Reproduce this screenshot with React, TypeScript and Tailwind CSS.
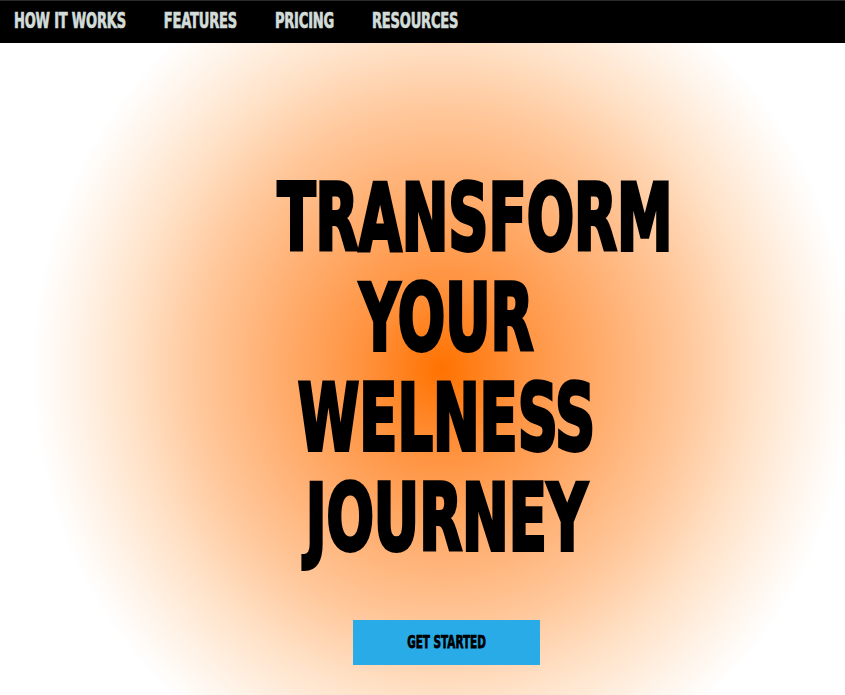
const NAV_ITEMS = ["HOW IT WORKS", "FEATURES", "PRICING", "RESOURCES"];

const HEADLINE = ["TRANSFORM", "YOUR", "WELNESS", "JOURNEY"];

// no Impact in the sandbox, so a condensed bold stretched up comes closest
const impact = {
  fontFamily: '"Liberation Sans Narrow", "DejaVu Sans Condensed", "Liberation Sans", sans-serif',
};

const Navbar = () => (
  <nav className="flex h-[43px] items-center gap-[38px] border-t border-[#2b2b2b] bg-black pl-[14px]">
    {NAV_ITEMS.map((item) => (
      <a
        key={item}
        href="#"
        style={impact}
        className="inline-block scale-y-[1.4] text-[14.5px] font-bold tracking-[-0.2px] text-[#d2dcd9] [-webkit-text-stroke:0.5px_#d2dcd9]"
      >
        {item}
      </a>
    ))}
  </nav>
);

const Hero = () => (
  <section className="flex h-[652px] flex-col items-center overflow-hidden bg-[radial-gradient(ellipse_410px_435px_at_442px_326px,#ff7200_0%,#ff9340_20%,#ffad6e_40%,#ffc89c_60%,#ffe2c8_76%,#fff4ea_90%,#ffffff_100%)] pl-[48px] pt-[125px]">
    <h1 style={impact} className="w-[338px] text-center text-[62px] font-bold text-black">
      {HEADLINE.map((line) => (
        <span key={line} className="block leading-[100px] whitespace-nowrap">
          <span className="inline-block scale-y-[1.5] [-webkit-text-stroke:2.5px_#000]">{line}</span>
        </span>
      ))}
    </h1>
    <button
      type="button"
      style={impact}
      className="mt-[52px] flex h-[45px] w-[187px] items-center justify-center bg-[#29abe8] text-[11.6px] font-bold text-black"
    >
      <span className="inline-block scale-y-[1.5] [-webkit-text-stroke:0.5px_#000]">GET STARTED</span>
    </button>
  </section>
);

export default function App() {
  return (
    <div className="min-h-[695px] w-full bg-white">
      <Navbar />
      <Hero />
    </div>
  );
}
